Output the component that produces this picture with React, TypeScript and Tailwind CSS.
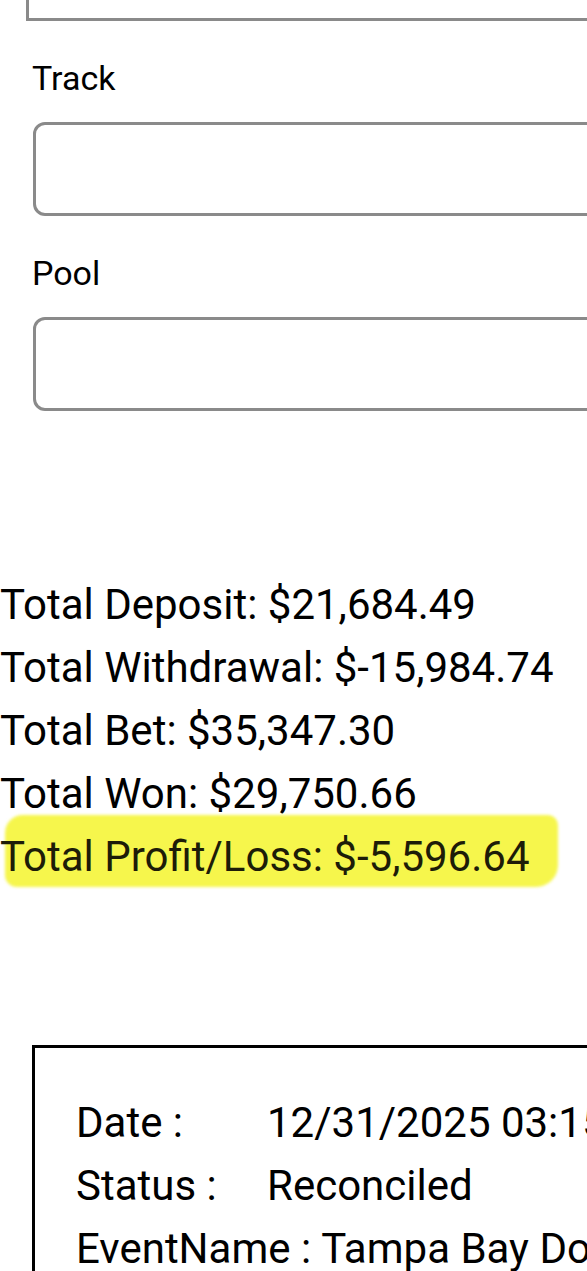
import React from "react";

const totals = [
  { label: "Total Deposit", value: "$21,684.49" },
  { label: "Total Withdrawal", value: "$-15,984.74" },
  { label: "Total Bet", value: "$35,347.30" },
  { label: "Total Won", value: "$29,750.66" },
];

const details = [
  { label: "Date :", value: "12/31/2025 03:15 PM" },
  { label: "Status :", value: "Reconciled" },
  { label: "EventName :", value: "Tampa Bay Downs" },
];

function Field({ label }: { label: string }) {
  return (
    <div className="flex flex-col">
      <label className="mt-[37px] ml-[32px] text-[34px] leading-[40px] text-black">
        {label}
      </label>
      <div className="mt-[24px] ml-[33px] h-[94px] w-[700px] rounded-[12px] border-[3px] border-[#8a8a8a] bg-white" />
    </div>
  );
}

export default function App() {
  return (
    <div
      className="min-h-screen w-full overflow-hidden bg-white text-black"
      style={{ fontFamily: "Roboto, 'Noto Sans', sans-serif" }}
    >
      <div className="w-[760px]">
        {/* tail of the previous input, scrolled off the top */}
        <div className="ml-[26px] h-[21px] w-[700px] border-x-[3px] border-b-[3px] border-[#8a8a8a]" />

        <Field label="Track" />
        <Field label="Pool" />

        {/* Summary */}
        <div className="mt-[162px] flex flex-col text-[42px] leading-[63px]">
          {totals.map((t) => (
            <div key={t.label}>
              {t.label}: {t.value}
            </div>
          ))}
          <div className="relative w-fit">
            <span className="absolute left-[5px] top-[-10px] h-[72px] w-[553px] rounded-tl-[18px] rounded-tr-[10px] rounded-br-[22px] rounded-bl-[12px] bg-[#f6f64c] blur-[1.5px]" />
            <span className="relative text-[#1d1c08]">Total Profit/Loss: $-5,596.64</span>
          </div>
        </div>

        {/* Transaction card */}
        <div className="mt-[157px] ml-[32px] w-[700px] border-[3px] border-black pt-[43px] pl-[41px] pb-[20px] text-[42px] leading-[63px]">
          {details.map((d) => (
            <div key={d.label} className="flex whitespace-nowrap">
              <span className="min-w-[191px] pr-[10px]">{d.label}</span>
              <span>{d.value}</span>
            </div>
          ))}
        </div>
      </div>
    </div>
  );
}
